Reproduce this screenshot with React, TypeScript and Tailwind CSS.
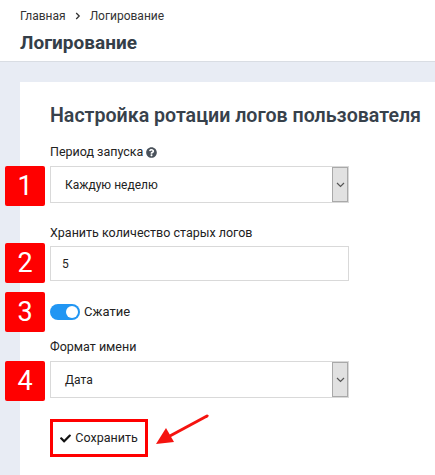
import React from "react";
import { FaCheck, FaQuestionCircle } from "react-icons/fa";

function Badge({ n, top = 0 }: { n: number; top?: number }) {
  return (
    <div
      className="absolute left-[-45px] flex h-[40px] w-[40px] items-center justify-center rounded-[2px] bg-[#ff0000] text-[27px] leading-none text-white"
      style={{ top }}
    >
      {n}
    </div>
  );
}

function Chevron() {
  return (
    <svg width="9" height="6" viewBox="0 0 9 6" fill="none">
      <path d="M1 1l3.5 3.5L8 1" stroke="#555" strokeWidth="1.2" />
    </svg>
  );
}

function SelectBox({ value }: { value: string }) {
  return (
    <div className="flex h-[37px] w-[299px] items-stretch border border-[#d9d9d9] bg-white">
      <div className="flex flex-1 items-center pl-[14px] text-[12px] text-[#222]">{value}</div>
      <div className="flex w-[16px] items-center justify-center border border-[#a9a9a9] bg-[#e1e1e1]">
        <Chevron />
      </div>
    </div>
  );
}

export default function App() {
  return (
    <div className="flex h-[475px] w-[435px] flex-col overflow-hidden bg-[#e8ecf4] font-['Roboto',sans-serif]">
      <header className="h-[62px] border-b border-[#d9dde3] bg-white px-[20px] pt-[8px]">
        <div className="flex items-center text-[12px] leading-[16px] text-[#333]">
          <span>Главная</span>
          <svg className="mx-[9px]" width="6" height="8" viewBox="0 0 6 8" fill="none">
            <path d="M1.2 1l3 3-3 3" stroke="#333" strokeWidth="1.3" />
          </svg>
          <span>Логирование</span>
        </div>
        <h1 className="mt-[8px] text-[19px] font-bold leading-[22px] text-[#343e48]">Логирование</h1>
      </header>
      <div className="flex-1 pl-[20px] pt-[20px]">
        <div className="h-full bg-white pl-[30px] pt-[22px]">
          <h2 className="text-[19.6px] font-semibold leading-[24px] text-[#37414b]">
            Настройка ротации логов пользователя
          </h2>

          <div className="mt-[16px] flex items-center gap-[3px] text-[12.5px] leading-[16px] text-[#222]">
            <span>Период запуска</span>
            <FaQuestionCircle className="h-[11px] w-[11px] text-[#4a525b]" />
          </div>
          <div className="relative mt-[6px]">
            <Badge n={1} />
            <SelectBox value="Каждую неделю" />
          </div>

          <div className="mt-[22px] text-[12.5px] leading-[16px] text-[#222]">
            Хранить количество старых логов
          </div>
          <div className="relative mt-[5px]">
            <Badge n={2} top={-3} />
            <div className="flex h-[35px] w-[299px] items-center border border-[#d9d9d9] bg-white pl-[11px] text-[12px] text-[#222]">
              5
            </div>
          </div>

          <div className="relative mt-[11px] flex h-[40px] items-center">
            <Badge n={3} />
            <div className="flex h-[16px] w-[30px] items-center justify-end rounded-full bg-[#2196f3] pr-[2px]">
              <div className="h-[12px] w-[12px] rounded-full bg-white" />
            </div>
            <span className="ml-[4px] text-[13px] text-[#222]">Сжатие</span>
          </div>

          <div className="mt-[7px] text-[12.5px] leading-[16px] text-[#222]">Формат имени</div>
          <div className="relative mt-[6px]">
            <Badge n={4} />
            <SelectBox value="Дата" />
          </div>

          <div className="relative mt-[21px]">
            <div className="flex h-[38px] w-[98px] items-center justify-center gap-[4px] border-[3px] border-[#ff0000] bg-white text-[12.5px] text-[#222]">
              <FaCheck className="h-[11px] w-[11px] text-[#111]" />
              <span>Сохранить</span>
            </div>
            <svg
              className="absolute left-[100px] top-[-6px]"
              width="62"
              height="38"
              viewBox="0 0 62 38"
              fill="none"
            >
              <path d="M57 3L18 24" stroke="#f5130f" strokeWidth="3" strokeLinecap="round" />
              <path d="M6 31L16 15L24 29Z" fill="#f5130f" />
            </svg>
          </div>
        </div>
      </div>
    </div>
  );
}
